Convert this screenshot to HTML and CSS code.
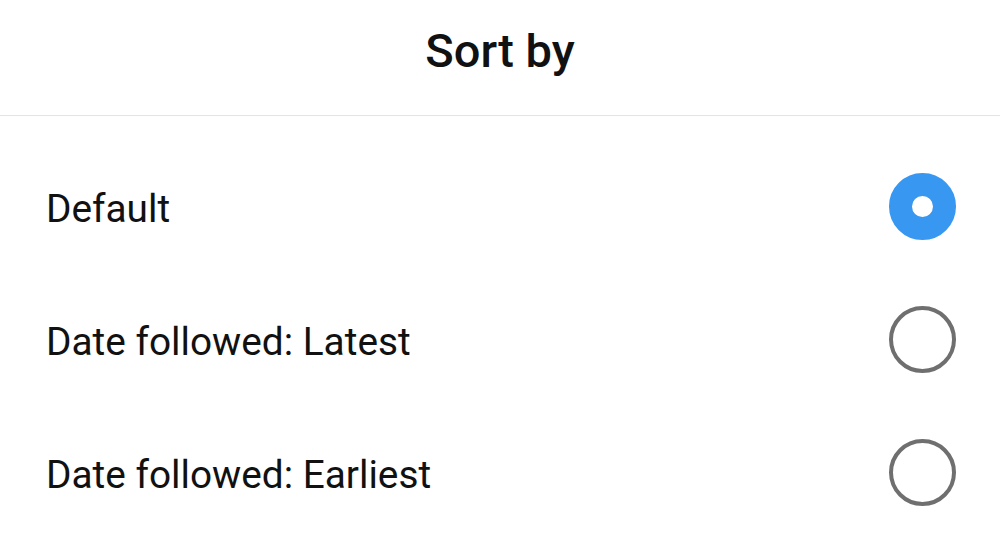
FILE: index.html
```html
<!DOCTYPE html>
<html>
<head>
<meta charset="utf-8">
<link rel="stylesheet" href="styles.css">
</head>
<body>
<div class="sheet">
  <header class="header"><h1 class="title">Sort by</h1></header>
  <ul class="options">
    <li class="option">
      <span class="label">Default</span>
      <span class="radio radio-on"></span>
    </li>
    <li class="option">
      <span class="label">Date followed: Latest</span>
      <span class="radio"></span>
    </li>
    <li class="option">
      <span class="label">Date followed: Earliest</span>
      <span class="radio"></span>
    </li>
  </ul>
</div>
</body>
</html>
```
FILE: styles.css
```css
html, body {
  margin: 0;
  padding: 0;
  background: #fff;
}
body {
  font-family: Roboto, "Liberation Sans", sans-serif;
  color: #111;
}
.sheet {
  width: 1000px;
  height: 542px;
  overflow: hidden;
}
.header {
  height: 115px;
  border-bottom: 1px solid #e3e3e3;
  display: flex;
  align-items: center;
  justify-content: center;
}
.title {
  margin: 0;
  font-size: 47px;
  font-weight: 500;
  color: #111;
  position: relative;
  top: -7px;
}
.options {
  list-style: none;
  margin: 0;
  padding: 24px 0 0 0;
}
.option {
  height: 133px;
  display: flex;
  align-items: center;
  justify-content: space-between;
  padding: 0 44px 0 46px;
}
.label {
  font-size: 38.8px;
  color: #111;
  padding-top: 3px;
}
.radio {
  box-sizing: border-box;
  width: 67px;
  height: 67px;
  border-radius: 50%;
  border: 4.5px solid #6f6f6f;
}
.radio-on {
  border: 23.5px solid #3897f0;
  background: #fff;
}
```
